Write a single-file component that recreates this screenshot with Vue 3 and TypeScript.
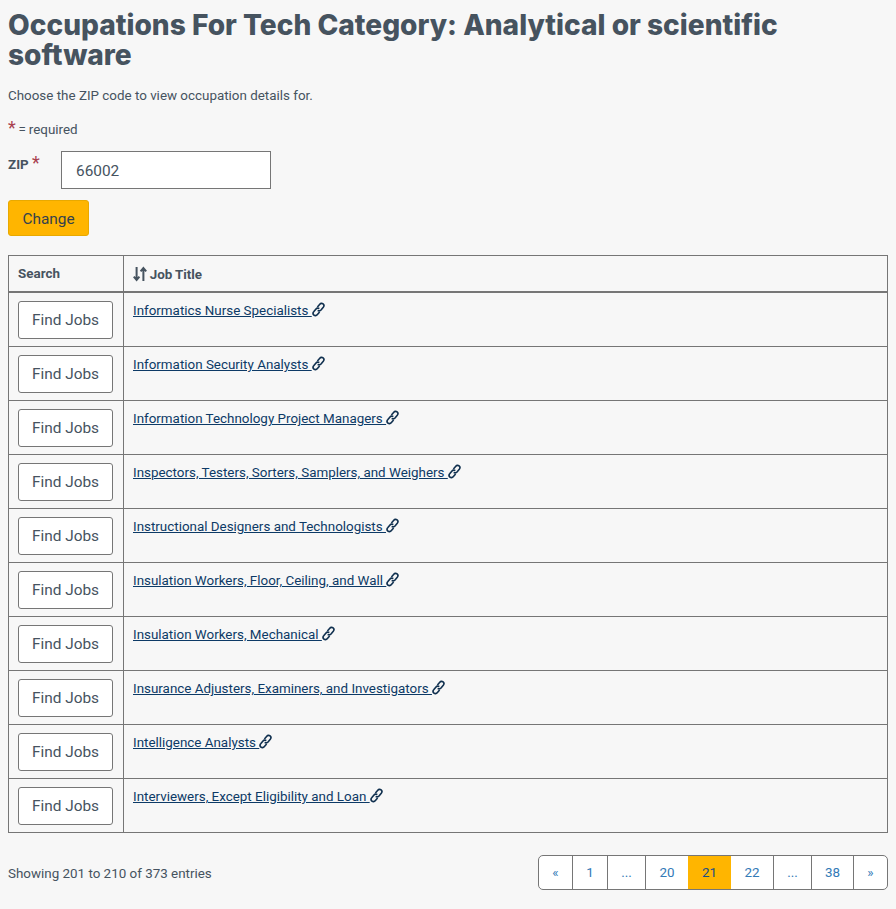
<script setup lang="ts">
const jobs: string[] = [
  'Informatics Nurse Specialists',
  'Information Security Analysts',
  'Information Technology Project Managers',
  'Inspectors, Testers, Sorters, Samplers, and Weighers',
  'Instructional Designers and Technologists',
  'Insulation Workers, Floor, Ceiling, and Wall',
  'Insulation Workers, Mechanical',
  'Insurance Adjusters, Examiners, and Investigators',
  'Intelligence Analysts',
  'Interviewers, Except Eligibility and Loan',
];

const pages = [
  { label: '«', width: 34 },
  { label: '1', width: 35 },
  { label: '...', width: 38 },
  { label: '20', width: 42 },
  { label: '21', width: 43, active: true },
  { label: '22', width: 43 },
  { label: '...', width: 38 },
  { label: '38', width: 42 },
  { label: '»', width: 33 },
];
</script>

<template>
  <main class="page">
    <h1 class="title">Occupations For Tech Category: Analytical or scientific software</h1>
    <p class="intro">Choose the ZIP code to view occupation details for.</p>
    <p class="required"><span class="star">*</span> = required</p>

    <form class="zip-form" @submit.prevent>
      <div class="zip-row">
        <label class="zip-label" for="zip">ZIP <span class="star">*</span></label>
        <input id="zip" class="zip-input" type="text" value="66002" />
      </div>
      <button class="change" type="submit">Change</button>
    </form>

    <table class="jobs">
      <thead>
        <tr>
          <th class="col-search">Search</th>
          <th class="col-title">
            <svg class="sort" width="14" height="16" viewBox="0 0 14 16" fill="none" stroke="#46535f" stroke-width="2">
              <path d="M3.6 1v13M.8 10.6l2.8 3.4 2.8-3.4" />
              <path d="M10.4 15V2M7.6 5.4 10.4 2l2.8 3.4" />
            </svg>
            Job Title
          </th>
        </tr>
      </thead>
      <tbody>
        <tr v-for="job in jobs" :key="job">
          <td class="cell-btn"><button class="find" type="button">Find Jobs</button></td>
          <td class="cell-job">
            <a class="job-link" href="#">{{ `${job} ` }}</a>
            <svg class="link-icon" width="13" height="15" viewBox="0 0 13 15" fill="none" stroke="#10304f" stroke-width="1.6">
              <path d="M5.4 5 7.8 2.2a2.3 2.3 0 0 1 3.5 3L9 8.1a2.3 2.3 0 0 1-3.3.2" />
              <path d="M7.6 10 5.2 12.8a2.3 2.3 0 0 1-3.5-3L4 6.9a2.3 2.3 0 0 1 3.3-.2" />
            </svg>
          </td>
        </tr>
      </tbody>
    </table>

    <div class="table-foot">
      <span class="entries">Showing 201 to 210 of 373 entries</span>
      <nav class="pager">
        <a
          v-for="(p, i) in pages"
          :key="i"
          class="pg"
          :class="{ active: p.active }"
          :style="{ width: p.width + 'px' }"
          href="#"
        >{{ p.label }}</a>
      </nav>
    </div>
  </main>
</template>

<style>
html, body {
  background: #f7f7f7;
}
</style>

<style scoped>
.page {
  box-sizing: border-box;
  width: 896px;
  height: 909px;
  padding: 10px 8px 0;
  overflow: hidden;
  font-family: Roboto, "Liberation Sans", sans-serif;
  font-size: 14px;
  color: #46535f;
}

.title {
  margin: 0;
  font-family: Inter, "Open Sans", sans-serif;
  font-size: 28.1px;
  line-height: 30px;
  font-weight: 800;
  color: #46535f;
}

.intro {
  margin: 17px 0 0;
  font-size: 13.4px;
  line-height: 18px;
}

.required {
  margin: 16px 0 0;
  font-size: 13.4px;
  line-height: 18px;
  word-spacing: -0.5px;
}

.star {
  color: #a8404f;
  font-size: 18px;
  line-height: 14px;
}

.zip-form {
  margin-top: 12px;
}

.zip-row {
  display: flex;
  align-items: flex-start;
}

.zip-label {
  width: 53px;
  padding-top: 5px;
  font-size: 13.4px;
  font-weight: 700;
  line-height: 18px;
}

.zip-label .star {
  font-weight: 400;
}

.zip-input {
  box-sizing: border-box;
  width: 210px;
  height: 38px;
  padding: 2px 14px 0;
  border: 1px solid #767676;
  background: #fff;
  font-family: inherit;
  font-size: 15.4px;
  color: #46535f;
}

.change {
  display: block;
  box-sizing: border-box;
  width: 81px;
  height: 36px;
  margin-top: 11px;
  padding: 2px 0 0;
  border: 1px solid #e8a900;
  border-radius: 3px;
  background: #ffb500;
  font-family: inherit;
  font-size: 15.4px;
  color: #33414e;
}

.jobs {
  width: 880px;
  margin-top: 19px;
  border-collapse: collapse;
  table-layout: fixed;
  border: 1px solid #767676;
}

.jobs th {
  height: 35px;
  padding: 0 9px;
  border: 1px solid #767676;
  border-bottom: 2px solid #767676;
  text-align: left;
  font-size: 13.4px;
  font-weight: 700;
}

.col-search {
  width: 96px;
}

.jobs .col-title {
  word-spacing: -0.5px;
}

.sort {
  vertical-align: -3px;
}

.jobs td {
  padding: 8px 9px 7px;
  border: 1px solid #767676;
  vertical-align: top;
}

.jobs .cell-job {
  padding-top: 9px;
  font-size: 13.4px;
  line-height: 18px;
}

.find {
  display: block;
  box-sizing: border-box;
  width: 95px;
  height: 38px;
  border: 1px solid #767676;
  border-radius: 3px;
  background: #fff;
  font-family: inherit;
  font-size: 15.4px;
  color: #46535f;
}

.job-link {
  color: #0d3a66;
  text-decoration: underline;
  white-space: pre;
}

.link-icon {
  vertical-align: -2px;
}

.table-foot {
  display: flex;
  justify-content: space-between;
  align-items: center;
  margin-top: 22px;
}

.entries {
  padding-top: 2px;
  font-size: 13.4px;
}

.pager {
  display: flex;
  box-sizing: border-box;
  height: 35px;
  border: 1px solid #767676;
  border-radius: 5px;
  background: #fff;
  overflow: hidden;
}

.pg {
  display: flex;
  box-sizing: border-box;
  align-items: center;
  justify-content: center;
  border-right: 1px solid #767676;
  font-size: 13.4px;
  color: #337ab7;
  text-decoration: none;
}

.pg:last-child {
  border-right: none;
}

.pg:has(+ .active) {
  border-right: none;
}

.pg.active {
  border-right: none;
  background: #ffb500;
  color: #1c4f86;
}
</style>
